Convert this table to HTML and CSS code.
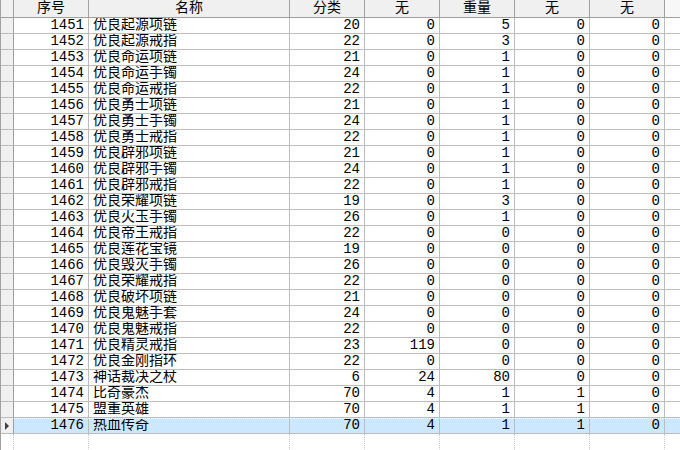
FILE: index.html
```html
<!DOCTYPE html>
<html lang="zh">
<head>
<meta charset="utf-8">
<title>Grid</title>
<link rel="stylesheet" href="styles.css">
</head>
<body>
<div class="grid">
  <div class="row head">
    <div class="c rh"></div>
    <div class="c">序号</div>
    <div class="c">名称</div>
    <div class="c">分类</div>
    <div class="c">无</div>
    <div class="c">重量</div>
    <div class="c">无</div>
    <div class="c">无</div>
    <div class="c fill"></div>
  </div>
  <div id="body"></div>
  <div class="row empty">
    <div class="c rh"></div><div class="c"></div><div class="c"></div><div class="c"></div><div class="c"></div><div class="c"></div><div class="c"></div><div class="c"></div><div class="c fill"></div>
  </div>
</div>
<script>
var data = [
[1451,"优良起源项链",20,0,5,0,0],
[1452,"优良起源戒指",22,0,3,0,0],
[1453,"优良命运项链",21,0,1,0,0],
[1454,"优良命运手镯",24,0,1,0,0],
[1455,"优良命运戒指",22,0,1,0,0],
[1456,"优良勇士项链",21,0,1,0,0],
[1457,"优良勇士手镯",24,0,1,0,0],
[1458,"优良勇士戒指",22,0,1,0,0],
[1459,"优良辟邪项链",21,0,1,0,0],
[1460,"优良辟邪手镯",24,0,1,0,0],
[1461,"优良辟邪戒指",22,0,1,0,0],
[1462,"优良荣耀项链",19,0,3,0,0],
[1463,"优良火玉手镯",26,0,1,0,0],
[1464,"优良帝王戒指",22,0,0,0,0],
[1465,"优良莲花宝镜",19,0,0,0,0],
[1466,"优良毁灭手镯",26,0,0,0,0],
[1467,"优良荣耀戒指",22,0,0,0,0],
[1468,"优良破坏项链",21,0,0,0,0],
[1469,"优良鬼魅手套",24,0,0,0,0],
[1470,"优良鬼魅戒指",22,0,0,0,0],
[1471,"优良精灵戒指",23,119,0,0,0],
[1472,"优良金刚指环",22,0,0,0,0],
[1473,"神话裁决之杖",6,24,80,0,0],
[1474,"比奇豪杰",70,4,1,1,0],
[1475,"盟重英雄",70,4,1,1,0],
[1476,"热血传奇",70,4,1,1,0]
];
var body = document.getElementById("body");
var html = "";
data.forEach(function (r, i) {
  var sel = i === data.length - 1;
  html += '<div class="row' + (sel ? ' sel' : '') + '">';
  html += '<div class="c rh">' + (sel ? '<span class="arrow"></span>' : '') + '</div>';
  html += '<div class="c num">' + r[0] + '</div>';
  html += '<div class="c txt">' + r[1] + '</div>';
  for (var k = 2; k < 7; k++) html += '<div class="c num">' + r[k] + '</div>';
  html += '<div class="c fill"></div></div>';
});
body.innerHTML = html;
</script>
</body>
</html>
```

FILE: styles.css
```css
html, body {
  margin: 0;
  padding: 0;
  background: #ffffff;
}
body {
  width: 680px;
  height: 450px;
  overflow: hidden;
  font-family: "Liberation Mono", "Noto Sans CJK SC", monospace;
  font-size: 14px;
  color: #000;
}
.grid {
  border-left: 1px solid #a0a0a0;
}
.row {
  display: grid;
  grid-template-columns: 13px 75px 201px 75px 75px 75px 75px 75px 1fr;
  height: 16px;
}
.c {
  box-sizing: border-box;
  border-right: 1px solid #bcbcbc;
  border-bottom: 1px solid #bcbcbc;
  line-height: 15px;
  white-space: nowrap;
  overflow: hidden;
}
.c.fill {
  border-right: none;
}
.head {
  height: 18px;
  background: #f0f0f0;
}
.head .c {
  line-height: 17px;
  text-align: center;
  border-bottom: 1px solid #a0a0a0;
  border-right: 1px solid #a0a0a0;
}
.head .c.fill {
  background: #f7f7f7;
  border-right: none;
}
.rh {
  background: #f0f0f0;
  position: relative;
  border-right-color: #a0a0a0;
}
.num {
  text-align: right;
  padding-right: 4px;
}
.txt {
  padding-left: 4px;
}
.sel {
  background: #cce8ff;
}
.sel .c {
  border-top: 1px dotted #ffffff;
  line-height: 13px;
}
.sel .rh {
  background: #f0f0f0;
  border-top: none;
}
.arrow {
  position: absolute;
  left: 4px;
  top: 4px;
  width: 0;
  height: 0;
  border-top: 4px solid transparent;
  border-bottom: 4px solid transparent;
  border-left: 4px solid #404040;
}
.empty .c {
  border-bottom: none;
  border-right: 1px dotted #c8c8c8;
  background: #fff;
}
.empty .c.fill {
  border-right: none;
}
```
